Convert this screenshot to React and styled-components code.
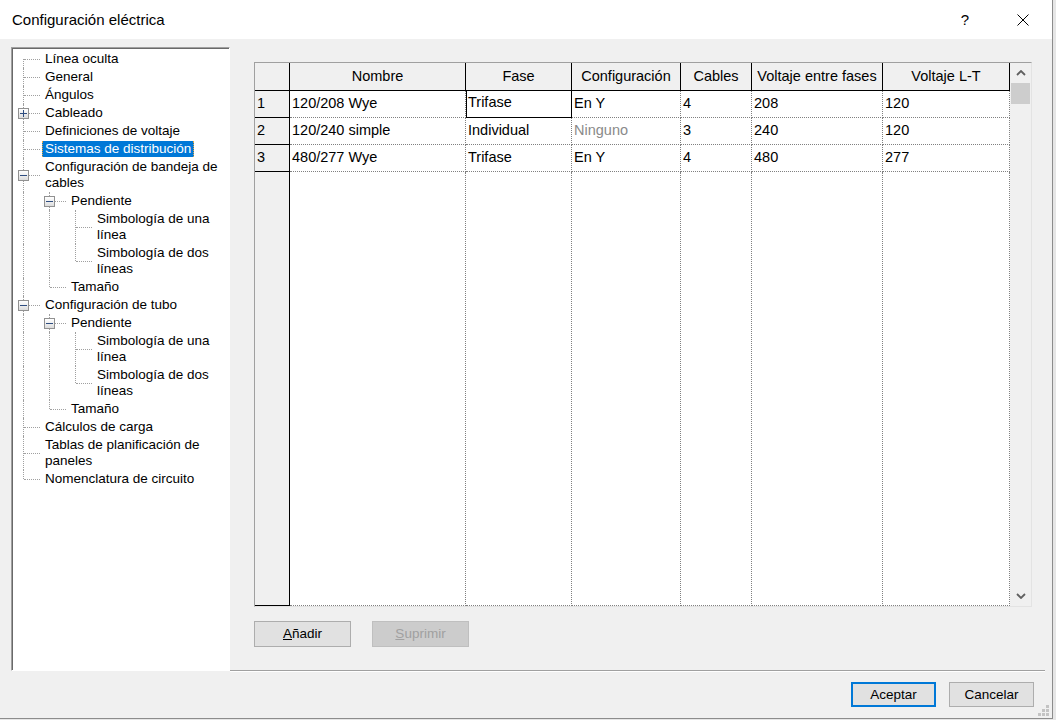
import React from "react";
import styled, { createGlobalStyle } from "styled-components";

const GlobalStyle = createGlobalStyle`
  html, body {
    margin: 0;
    padding: 0;
    background: #e6e6e6;
  }
  body {
    font-family: "Liberation Sans", Arial, sans-serif;
    color: #000;
  }
  * {
    box-sizing: border-box;
  }
`;

const treeItems = [
  { level: 0, text: "Línea oculta" },
  { level: 0, text: "General" },
  { level: 0, text: "Ángulos" },
  { level: 0, text: "Cableado", expander: "plus" },
  { level: 0, text: "Definiciones de voltaje" },
  { level: 0, text: "Sistemas de distribución", selected: true },
  { level: 0, text: "Configuración de bandeja de\ncables", expander: "minus" },
  { level: 1, text: "Pendiente", expander: "minus" },
  { level: 2, text: "Simbología de una\nlínea" },
  { level: 2, text: "Simbología de dos\nlíneas" },
  { level: 1, text: "Tamaño" },
  { level: 0, text: "Configuración de tubo", expander: "minus" },
  { level: 1, text: "Pendiente", expander: "minus" },
  { level: 2, text: "Simbología de una\nlínea" },
  { level: 2, text: "Simbología de dos\nlíneas" },
  { level: 1, text: "Tamaño" },
  { level: 0, text: "Cálculos de carga" },
  { level: 0, text: "Tablas de planificación de\npaneles" },
  { level: 0, text: "Nomenclatura de circuito" },
];

// is there a later item at this level before the tree climbs above it?
const hasNextAt = (index, level) => {
  for (let j = index + 1; j < treeItems.length; j++) {
    if (treeItems[j].level < level) return false;
    if (treeItems[j].level === level) return true;
  }
  return false;
};

const columns = [
  { title: "Nombre", width: 176 },
  { title: "Fase", width: 106 },
  { title: "Configuración", width: 109 },
  { title: "Cables", width: 71 },
  { title: "Voltaje entre fases", width: 131 },
  { title: "Voltaje L-T", width: 127 },
];

const rows = [
  ["120/208 Wye", "Trifase", "En Y", "4", "208", "120"],
  ["120/240 simple", "Individual", "Ninguno", "3", "240", "120"],
  ["480/277 Wye", "Trifase", "En Y", "4", "480", "277"],
];

const Window = styled.div`
  width: 1053px;
  height: 719px;
  background: #f0f0f0;
  border-right: 1px solid #8c8c8c;
  border-bottom: 1px solid #8c8c8c;
  display: flex;
  flex-direction: column;
`;

const TitleBar = styled.div`
  height: 39px;
  flex: 0 0 39px;
  background: #fff;
  display: flex;
  align-items: center;
  padding: 0 6px 0 12px;
`;

const Title = styled.div`
  flex: 1;
  font-size: 15px;
  padding-bottom: 1px;
`;

const CaptionButton = styled.div`
  width: 46px;
  height: 30px;
  display: flex;
  align-items: center;
  justify-content: center;
  font-size: 15px;
  margin-left: ${(p) => p.$gap || 0}px;
`;

const Main = styled.div`
  flex: 0 0 632px;
  display: flex;
  padding-left: 11px;
`;

const TreePanel = styled.div`
  width: 219px;
  margin-top: 8px;
  background: #fff;
  border-top: 1px solid #a0a0a0;
  border-left: 1px solid #a0a0a0;
  border-right: 1px solid #fff;
  border-bottom: 1px solid #fff;
  box-shadow: inset 1px 1px 0 #696969;
  padding-top: 2px;
  overflow: hidden;
`;

const TreeRow = styled.div`
  display: flex;
  min-height: 18px;
`;

const Guide = styled.span`
  position: relative;
  flex: 0 0 26px;

  &::before {
    content: "";
    display: ${(p) => (p.$up || p.$down ? "block" : "none")};
    position: absolute;
    left: 11px;
    top: ${(p) => (p.$up ? "0" : "50%")};
    bottom: ${(p) => (p.$down ? "0" : "50%")};
    border-left: 1px dotted #a0a0a0;
  }

  &::after {
    content: "";
    display: ${(p) => (p.$branch ? "block" : "none")};
    position: absolute;
    left: 12px;
    width: 16px;
    top: 50%;
    border-top: 1px dotted #a0a0a0;
  }
`;

const Expander = styled.span`
  position: absolute;
  z-index: 1;
  left: 6px;
  top: calc(50% - 5px);
  width: 11px;
  height: 11px;
  border: 1px solid #919191;
  background: linear-gradient(#ffffff, #dcdcdc);

  &::before {
    content: "";
    position: absolute;
    left: 1px;
    right: 1px;
    top: 4px;
    height: 1px;
    background: #2e4d80;
  }

  &::after {
    content: "";
    display: ${(p) => (p.$kind === "plus" ? "block" : "none")};
    position: absolute;
    top: 1px;
    bottom: 1px;
    left: 4px;
    width: 1px;
    background: #2e4d80;
  }
`;

const TreeLabel = styled.span`
  align-self: flex-start;
  margin: 1px 0 1px 4px;
  padding: 0 2px;
  font-size: 13.5px;
  line-height: 16px;
  white-space: pre;
  background: ${(p) => (p.$selected ? "#0078d7" : "transparent")};
  color: ${(p) => (p.$selected ? "#fff" : "#000")};
  border: 1px ${(p) => (p.$selected ? "dotted #e0a84a" : "solid transparent")};
  border-width: 0 1px;
`;

const Content = styled.div`
  flex: 1;
  margin-right: 7px;
  padding: 23px 13px 0 24px;
  border-bottom: 1px solid #a0a0a0;
  box-shadow: 0 1px 0 #fff;
  display: flex;
  flex-direction: column;
`;

const GridFrame = styled.div`
  height: 545px;
  display: flex;
  border-top: 1px solid #a0a0a0;
  border-left: 1px solid #a0a0a0;
  border-right: 1px solid #e3e3e3;
  border-bottom: 1px solid #e3e3e3;
`;

const Grid = styled.div`
  display: grid;
  grid-template-columns: 35px ${columns.map((c) => c.width + "px").join(" ")};
  grid-template-rows: 28px 27px 27px 27px 1fr;
  background: #fff;
  font-size: 14.5px;
`;

const HeadCell = styled.div`
  background: #f0f0f0;
  border-right: 1px solid #000;
  border-bottom: 1px solid #000;
  display: flex;
  align-items: center;
  justify-content: center;
  padding-bottom: 1px;
  white-space: nowrap;
  overflow: hidden;
`;

const RowHead = styled.div`
  background: #f0f0f0;
  border-right: 1px solid #000;
  border-bottom: 1px solid #000;
  display: flex;
  align-items: center;
  padding: 0 0 3px 2px;
`;

const Cell = styled.div`
  border-right: 1px ${(p) => (p.$focus ? "solid #000" : "dotted #808080")};
  border-bottom: 1px ${(p) => (p.$focus ? "solid #000" : "dotted #808080")};
  box-shadow: ${(p) => (p.$focus ? "inset 1px 1px 0 #000" : "none")};
  margin-top: ${(p) => (p.$focus ? "-1px" : "0")};
  display: flex;
  align-items: center;
  padding: 0 0 3px 2px;
  color: ${(p) => (p.$muted ? "#8a8a8a" : "#000")};
  white-space: nowrap;
  overflow: hidden;
`;

const Scrollbar = styled.div`
  flex: 1;
  background: #f0f0f0;
  display: flex;
  flex-direction: column;
  align-items: center;
`;

const ScrollArrow = styled.div`
  height: 20px;
  width: 100%;
  display: flex;
  align-items: center;
  justify-content: center;
`;

const Thumb = styled.div`
  width: 19px;
  height: 21px;
  background: #cdcdcd;
`;

const ScrollTrack = styled.div`
  flex: 1;
`;

const ButtonRow = styled.div`
  display: flex;
  gap: 21px;
  margin-top: 14px;
`;

const Button = styled.div`
  width: ${(p) => p.$w}px;
  height: ${(p) => p.$h}px;
  display: flex;
  align-items: center;
  justify-content: center;
  font-size: 13.5px;
  padding-bottom: 1px;
  background: ${(p) => (p.$disabled ? "#cccccc" : "#e1e1e1")};
  color: ${(p) => (p.$disabled ? "#a0a0a0" : "#000")};
  border: ${(p) =>
    p.$default ? "2px solid #0078d7" : p.$disabled ? "1px solid #bfbfbf" : "1px solid #adadad"};
`;

const Footer = styled.div`
  position: relative;
  flex: 1;
  display: flex;
  justify-content: flex-end;
  align-items: flex-start;
  gap: 13px;
  padding: 11px 18px 0 0;
`;

const Grip = styled.svg`
  position: absolute;
  right: 3px;
  bottom: 2px;
`;

function Chevron({ down }) {
  return (
    <svg width="10" height="6" viewBox="0 0 10 6">
      <polyline
        points={down ? "1,1 5,5 9,1" : "1,5 5,1 9,5"}
        fill="none"
        stroke="#606060"
        strokeWidth="1.8"
      />
    </svg>
  );
}

function Tree() {
  return (
    <TreePanel>
      {treeItems.map((item, i) => {
        const guides = [];
        for (let a = 0; a < item.level; a++) {
          const pass = hasNextAt(i, a);
          guides.push(<Guide key={a} $up={pass} $down={pass} />);
        }
        guides.push(
          <Guide key="own" $up={i > 0} $down={hasNextAt(i, item.level)} $branch>
            {item.expander && <Expander $kind={item.expander} />}
          </Guide>
        );
        return (
          <TreeRow key={i}>
            {guides}
            <TreeLabel $selected={item.selected}>{item.text}</TreeLabel>
          </TreeRow>
        );
      })}
    </TreePanel>
  );
}

function DistributionGrid() {
  return (
    <GridFrame>
      <Grid>
        <HeadCell />
        {columns.map((c) => (
          <HeadCell key={c.title}>{c.title}</HeadCell>
        ))}
        {rows.map((row, r) => (
          <React.Fragment key={r}>
            <RowHead>{r + 1}</RowHead>
            {row.map((value, c) => (
              <Cell key={c} $focus={r === 0 && c === 1} $muted={value === "Ninguno"}>
                {value}
              </Cell>
            ))}
          </React.Fragment>
        ))}
        <RowHead />
        {columns.map((c) => (
          <Cell key={c.title} />
        ))}
      </Grid>
      <Scrollbar>
        <ScrollArrow>
          <Chevron />
        </ScrollArrow>
        <Thumb />
        <ScrollTrack />
        <ScrollArrow>
          <Chevron down />
        </ScrollArrow>
      </Scrollbar>
    </GridFrame>
  );
}

export default function App() {
  return (
    <>
      <GlobalStyle />
      <Window>
        <TitleBar>
          <Title>Configuración eléctrica</Title>
          <CaptionButton>?</CaptionButton>
          <CaptionButton $gap={12}>
            <svg width="12" height="12" viewBox="0 0 12 12">
              <path d="M0.5 0.5 L11.5 11.5 M11.5 0.5 L0.5 11.5" stroke="#000" strokeWidth="1" />
            </svg>
          </CaptionButton>
        </TitleBar>
        <Main>
          <Tree />
          <Content>
            <DistributionGrid />
            <ButtonRow>
              <Button $w={97} $h={26}>
                <u>A</u>ñadir
              </Button>
              <Button $w={97} $h={26} $disabled>
                <u>S</u>uprimir
              </Button>
            </ButtonRow>
          </Content>
        </Main>
        <Footer>
          <Button $w={85} $h={25} $default>
            Aceptar
          </Button>
          <Button $w={85} $h={25}>
            Cancelar
          </Button>
          <Grip width="11" height="11" viewBox="0 0 11 11">
            {[
              [8, 0],
              [4, 4],
              [8, 4],
              [0, 8],
              [4, 8],
              [8, 8],
            ].map(([x, y]) => (
              <rect key={`${x}-${y}`} x={x} y={y} width="3" height="3" fill="#c3c3c3" />
            ))}
          </Grip>
        </Footer>
      </Window>
    </>
  );
}
